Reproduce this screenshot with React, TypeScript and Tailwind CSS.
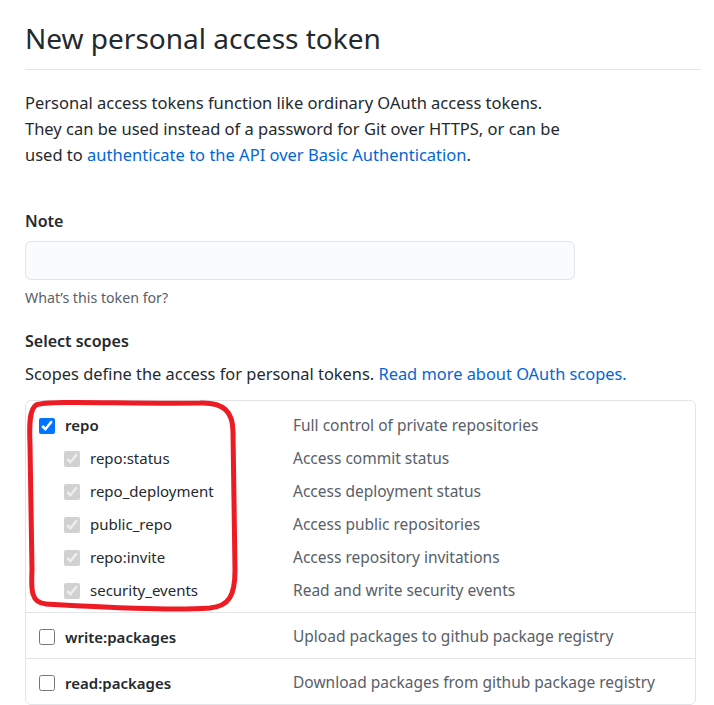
import React from "react";

const subScopes = [
  { name: "repo:status", desc: "Access commit status" },
  { name: "repo_deployment", desc: "Access deployment status" },
  { name: "public_repo", desc: "Access public repositories" },
  { name: "repo:invite", desc: "Access repository invitations" },
  { name: "security_events", desc: "Read and write security events" },
];

export default function App() {
  return (
    <div className="relative w-[714px] h-[705px] overflow-hidden bg-white text-[#24292e] font-['Noto_Sans',sans-serif]">
      <div className="pl-[25px] pr-[13px] pt-[18px]">
        <h1 className="text-[28px] leading-[40px] font-normal pb-[11px] border-b border-[#e1e4e8]">
          New personal access token
        </h1>

        <p className="mt-[20px] text-[16.5px] leading-[26px] whitespace-nowrap">
          Personal access tokens function like ordinary OAuth access tokens.
          <br />
          They can be used instead of a password for Git over HTTPS, or can be
          <br />
          used to{" "}
          <a href="#" className="text-[#0366d6]">
            authenticate to the API over Basic Authentication
          </a>
          .
        </p>

        <div className="mt-[40px] text-[16px] leading-[26px] font-semibold">Note</div>
        <input
          type="text"
          className="mt-[7px] block w-[550px] h-[39px] rounded-[6px] border border-[#e1e4e8] bg-[#fafbfc] px-3 outline-none"
        />
        <div className="mt-[8px] text-[14.2px] leading-[20px] text-[#586069]">What’s this token for?</div>

        <div className="mt-[20px] text-[16px] leading-[26px] font-semibold">Select scopes</div>
        <p className="mt-[7px] text-[16.4px] leading-[26px] whitespace-nowrap">
          Scopes define the access for personal tokens.{" "}
          <a href="#" className="text-[#0366d6]">
            Read more about OAuth scopes.
          </a>
        </p>

        <div className="mt-[13px] w-[671px] rounded-[6px] border border-[#e1e4e8] text-[15.5px]">
          <div className="pt-[8px] pb-[5px]">
            <div className="flex h-[33px] items-center">
              <div className="w-[267px] pl-[13px] flex items-center">
                <input type="checkbox" defaultChecked className="m-0 w-4 h-4" />
                <span className="ml-[10px] font-semibold text-[15px]">repo</span>
              </div>
              <span className="text-[#586069]">Full control of private repositories</span>
            </div>
            {subScopes.map((s) => (
              <div key={s.name} className="flex h-[33px] items-center">
                <div className="w-[267px] pl-[38px] flex items-center">
                  <input type="checkbox" defaultChecked disabled className="m-0 w-4 h-4" />
                  <span className="ml-[10px] text-[15px]">{s.name}</span>
                </div>
                <span className="text-[#586069]">{s.desc}</span>
              </div>
            ))}
          </div>
          <div className="flex h-[46px] pt-[3px] items-center border-t border-[#e1e4e8]">
            <div className="w-[267px] pl-[13px] flex items-center">
              <input type="checkbox" className="m-0 w-4 h-4" />
              <span className="ml-[10px] font-semibold text-[15px]">write:packages</span>
            </div>
            <span className="text-[#586069]">Upload packages to github package registry</span>
          </div>
          <div className="flex h-[46px] pt-[3px] items-center border-t border-[#e1e4e8]">
            <div className="w-[267px] pl-[13px] flex items-center">
              <input type="checkbox" className="m-0 w-4 h-4" />
              <span className="ml-[10px] font-semibold text-[15px]">read:packages</span>
            </div>
            <span className="text-[#586069]">Download packages from github package registry</span>
          </div>
        </div>
      </div>

      {/* hand-drawn highlight around the repo group */}
      <svg
        className="absolute left-0 top-0 pointer-events-none"
        width="714"
        height="705"
        viewBox="0 0 714 705"
        fill="none"
      >
        <path
          d="M36 405 C48 400 120 404 200 403 C224 402 233 412 233 432 L235 570 C235 596 229 606 210 608 C170 611 100 607 46 604 C31 603 31 590 32 570 L30 445 C29 422 30 409 36 405 Z"
          stroke="#ed1c24"
          strokeWidth="5"
          strokeLinejoin="round"
        />
      </svg>
    </div>
  );
}
